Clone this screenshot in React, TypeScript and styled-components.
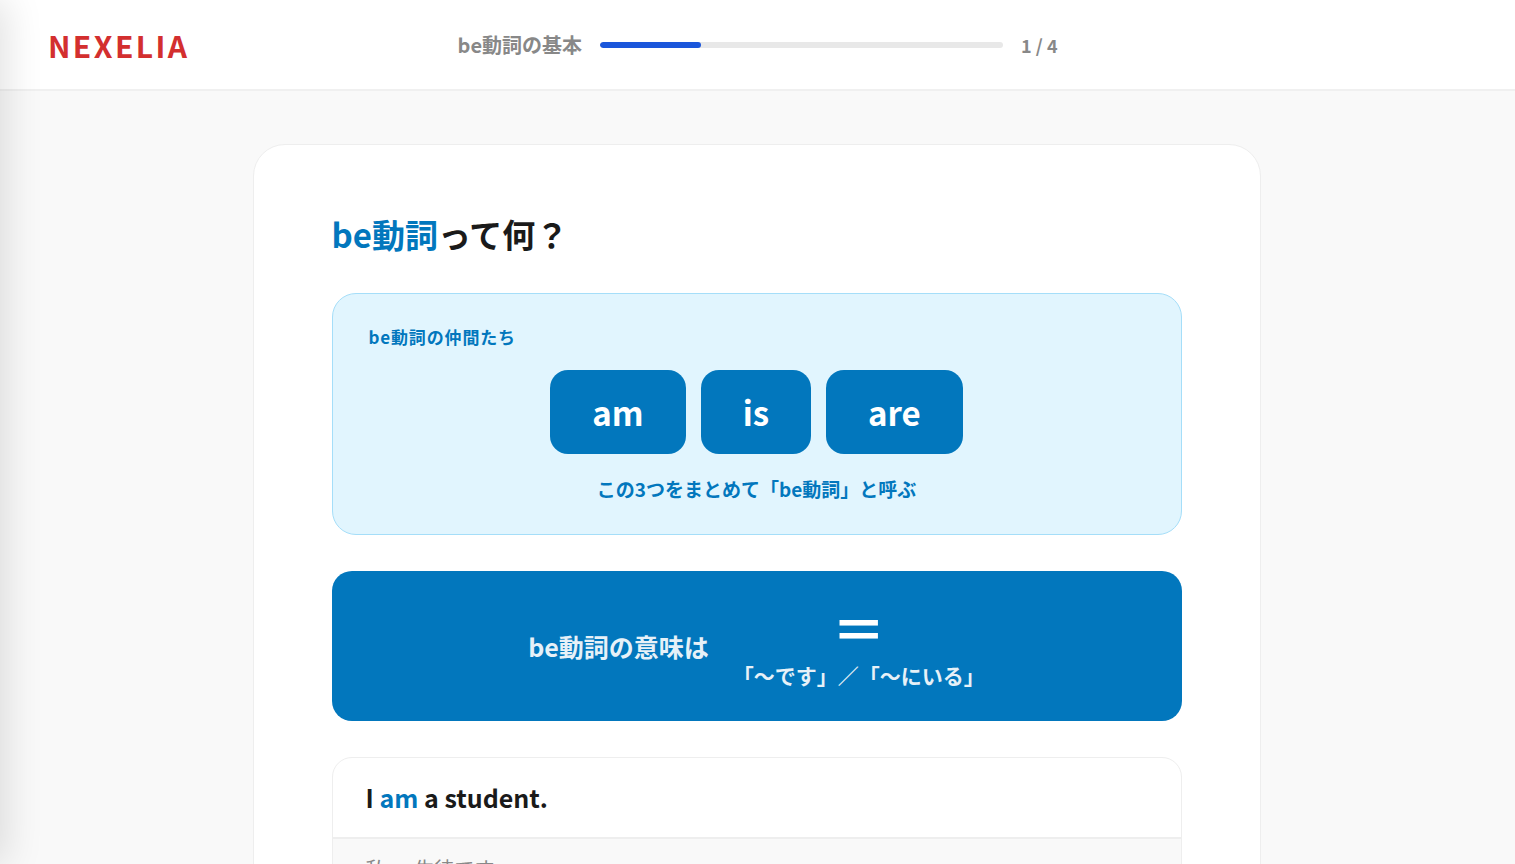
import React from "react";
import styled, { createGlobalStyle } from "styled-components";

const GlobalStyle = createGlobalStyle`
  *, *::before, *::after { box-sizing: border-box; }
  html { scrollbar-width: none; }
  body {
    margin: 0;
    background: #f9f9f9;
    color: #1a1a1a;
    font-family: "Noto Sans CJK JP", "Noto Sans", sans-serif;
  }
  h1, h2, p { margin: 0; }
`;

const Header = styled.header`
  display: grid;
  grid-template-columns: 1fr minmax(0, 600px) 1fr;
  align-items: center;
  height: 91px;
  padding: 0 48px;
  background: #fff;
  border-bottom: 2px solid #f0f0f0;
`;

const Brand = styled.a`
  color: #d32f2f;
  font-size: 30px;
  font-weight: 700;
  line-height: 44px;
  letter-spacing: 0.08em;
  text-decoration: none;
`;

const Progress = styled.div`
  display: flex;
  align-items: center;
  gap: 18px;
  color: #888;
  font-weight: 700;
  line-height: 28px;
  white-space: nowrap;
`;

const ProgressLabel = styled.span`
  font-size: 20px;
`;

const ProgressCount = styled.span`
  font-size: 18px;
`;

const Track = styled.div`
  flex: 1;
  height: 6px;
  border-radius: 3px;
  background: #e8e8e8;
  overflow: hidden;
`;

const Fill = styled.div`
  height: 100%;
  border-radius: 3px;
  background: #1a56db;
`;

const Drawer = styled.aside`
  position: fixed;
  top: 0;
  bottom: 0;
  left: -340px;
  width: 340px;
  background: #fff;
  box-shadow: 6px 0 36px rgba(0, 0, 0, 0.12);
`;

const Main = styled.main`
  padding: 53px 26px 53px 24px;
`;

const Card = styled.article`
  max-width: 1008px;
  margin: 0 auto;
  padding: 62px 78px;
  background: #fff;
  border: 1px solid #eee;
  border-radius: 32px;
`;

const Title = styled.h1`
  margin-bottom: 32px;
  font-size: 33px;
  font-weight: 700;
  line-height: 54px;
`;

const Accent = styled.span`
  color: #0277bd;
`;

const Family = styled.section`
  margin-bottom: 36px;
  padding: 28px 36px;
  color: #0277bd;
  background: #e1f5fe;
  border: 1px solid #a5def9;
  border-radius: 24px;
`;

const FamilyLabel = styled.h2`
  margin-bottom: 18px;
  font-size: 17px;
  font-weight: 700;
  line-height: 30px;
  letter-spacing: 0.05em;
`;

const Words = styled.div`
  display: flex;
  justify-content: center;
  gap: 15px;
  margin-bottom: 18px;
`;

const Word = styled.span`
  padding: 12px 42px;
  color: #fff;
  background: #0277bd;
  border-radius: 18px;
  font-size: 33px;
  font-weight: 700;
  line-height: 60px;
`;

const FamilyNote = styled.p`
  font-size: 19px;
  font-weight: 700;
  line-height: 34px;
  text-align: center;
`;

const Meaning = styled.section`
  display: flex;
  align-items: center;
  justify-content: center;
  gap: 24px;
  margin-bottom: 36px;
  padding: 28px 36px;
  color: #fff;
  background: #0277bd;
  border-radius: 20px;
  font-weight: 700;
`;

const MeaningLabel = styled.p`
  font-size: 25px;
  line-height: 44px;
  opacity: 0.9;
`;

const MeaningValue = styled.div`
  display: flex;
  flex-direction: column;
  align-items: center;
`;

const Equals = styled.span`
  font-size: 54px;
  line-height: 58px;
`;

const Gloss = styled.span`
  font-size: 21px;
  line-height: 36px;
  opacity: 0.9;
`;

const Example = styled.section`
  border: 1px solid #eee;
  border-radius: 20px;
  overflow: hidden;
`;

const Sentence = styled.p`
  padding: 18px 33px;
  font-size: 25px;
  font-weight: 700;
  line-height: 43px;
`;

const Translation = styled.p`
  padding: 12px 33px;
  color: #888;
  background: #f9f9f9;
  border-top: 2px solid #eee;
  font-size: 20px;
  line-height: 36px;
`;

const words = ["am", "is", "are"];
const step = 1;
const total = 4;

export default function App() {
  return (
    <>
      <GlobalStyle />
      <Header>
        <Brand href="#">NEXELIA</Brand>
        <Progress>
          <ProgressLabel id="lesson">be動詞の基本</ProgressLabel>
          <Track
            role="progressbar"
            aria-labelledby="lesson"
            aria-valuemin={0}
            aria-valuemax={total}
            aria-valuenow={step}
          >
            <Fill style={{ width: `${(step / total) * 100}%` }} />
          </Track>
          <ProgressCount>
            {step} / {total}
          </ProgressCount>
        </Progress>
      </Header>
      <Main>
        <Card>
          <Title>
            <Accent>be動詞</Accent>って何？
          </Title>
          <Family>
            <FamilyLabel>be動詞の仲間たち</FamilyLabel>
            <Words>
              {words.map((word) => (
                <Word key={word}>{word}</Word>
              ))}
            </Words>
            <FamilyNote>この3つをまとめて「be動詞」と呼ぶ</FamilyNote>
          </Family>
          <Meaning>
            <MeaningLabel>be動詞の意味は</MeaningLabel>
            <MeaningValue>
              <Equals>＝</Equals>
              <Gloss>「〜です」／「〜にいる」</Gloss>
            </MeaningValue>
          </Meaning>
          <Example>
            <Sentence>
              I <Accent>am</Accent> a student.
            </Sentence>
            <Translation>私 ＝ 生徒です</Translation>
          </Example>
        </Card>
      </Main>
      <Drawer aria-hidden="true" />
    </>
  );
}
